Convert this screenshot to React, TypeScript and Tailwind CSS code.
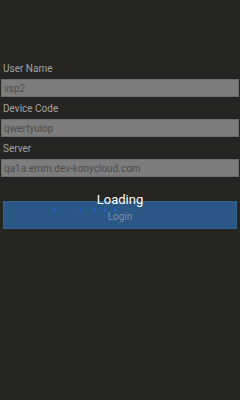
import React from "react";

const Field = ({ label, value }: { label: string; value: string }) => (
  <div className="flex flex-col">
    <span className="h-[22px] pl-[3px] pt-[6px] text-[10px] leading-[12px] text-[#a2a2a2]">{label}</span>
    <div className="mx-[1px] flex h-[18px] items-center border border-[#6f6f6f] bg-[#7d7d7d] pl-[2px] text-[10px] text-[#4d4d4d]">
      {value}
    </div>
  </div>
);

const Dot = ({ className }: { className: string }) => (
  <span className={`h-[2px] w-[2px] shrink-0 bg-[#1f63f5] ${className}`} />
);

export default function App() {
  return (
    <div
      className="flex h-[400px] w-[240px] flex-col bg-[#262522]"
      style={{ fontFamily: 'Roboto, "Open Sans", sans-serif' }}
    >
      <div className="flex flex-col pt-[57px]">
        <Field label="User Name" value="vsp2" />
        <Field label="Device Code" value="qwertyuiop" />
        <Field label="Server" value="qa1a.emm.dev-konycloud.com" />
      </div>
      <div className="relative mx-[3px] mt-[24px] flex h-[28px] items-end justify-center border border-[#2f5f8c] bg-[#2a5785] pb-[4px] text-[10px] text-[#7c8ea6]">
        Login
        {/* loading overlay */}
        <div className="absolute inset-x-0 top-[-11px] flex flex-col items-center">
          <span className="text-[13px] leading-[18px] text-white">Loading</span>
        </div>
        <div className="absolute inset-x-0 top-[7px] flex h-[2px] pl-[49px]">
          <Dot className="" />
          <Dot className="ml-[24px]" />
          <Dot className="ml-[12px]" />
          <Dot className="ml-[9px]" />
          <Dot className="ml-[8px]" />
        </div>
      </div>
    </div>
  );
}
